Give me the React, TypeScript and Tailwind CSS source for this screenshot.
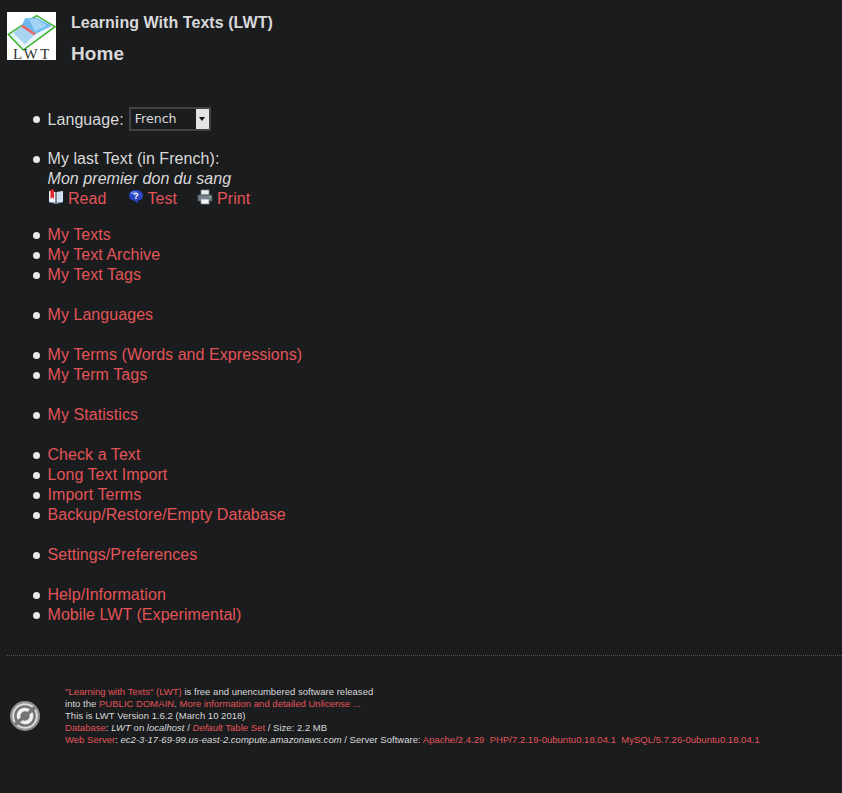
import React from 'react';

const link = 'text-[#e25458]';
const bullet = "relative list-none before:content-[''] before:absolute before:left-[-14.5px] before:top-[7px] before:w-[7px] before:h-[7px] before:rounded-full before:bg-[#e8e8e8]";
const firstBullet = "relative list-none h-[25px] before:content-[''] before:absolute before:left-[-14.5px] before:top-[8.5px] before:w-[7px] before:h-[7px] before:rounded-full before:bg-[#e8e8e8]";

function Logo() {
  return (
    <svg width="49" height="48" viewBox="0 0 49 48" className="block shrink-0 bg-white overflow-visible">
      <path d="M1.3 22.3 L29.7 3.7 L48 14.7 L16.3 38 Z" fill="#e8f5fb" stroke="#3bb32f" strokeWidth="1.5" />
      <path d="M6.3 21.3 L14.7 13.7 L28 22.3 L18 32.3 Z" fill="#a8d4f0" />
      <path d="M18 6.3 L29.7 5.7 L44.7 13.7 L28 22.3 L14.7 13.7 Z" fill="#6fb9f0" />
      <path d="M22 7 L30 7 L40 13.5 L28 19.5 Z" fill="#a2d3f6" />
      <path d="M14.7 13.7 L28 22.3" stroke="#e86a6a" strokeWidth="2.6" />
      <text x="25.5" y="47" textAnchor="middle" fontFamily="Liberation Serif, serif" fontSize="15" letterSpacing="2.6" fill="#333">LWT</text>
    </svg>
  );
}

function BookIcon() {
  return (
    <svg width="16" height="16" viewBox="0 0 16 16" className="block">
      <path d="M1 2 L7.5 3 V14 L1 13 Z" fill="#f2f5f9" />
      <path d="M8.5 3 L15 2 V13 L8.5 14 Z" fill="#dbe8f6" />
      <path d="M9.5 4.5 L14 3.8 M9.5 7 L14 6.3 M9.5 9.5 L14 8.8" stroke="#a9c6e6" strokeWidth="0.8" />
      <path d="M2.5 0.5 H6 V10 L4.2 8.2 L2.5 10 Z" fill="#e0262c" />
      <path d="M1 13 L8 14.5 L15 13" stroke="#6f8fb8" strokeWidth="1" fill="none" />
    </svg>
  );
}

function HelpIcon() {
  return (
    <svg width="16" height="16" viewBox="0 0 16 16" className="block">
      <path d="M8 1 C12 1 15 3.4 15 6.6 C15 9.6 12.4 11.6 9.6 11.8 L9.4 14.6 L7 11.9 C3.6 11.6 1 9.6 1 6.6 C1 3.4 4 1 8 1 Z" fill="#2b47c4" />
      <ellipse cx="6" cy="3.8" rx="3.4" ry="1.6" fill="#6f86e8" />
      <text x="8" y="10" textAnchor="middle" fontFamily="Liberation Sans, sans-serif" fontWeight="700" fontSize="9" fill="#fff">?</text>
    </svg>
  );
}

function PrintIcon() {
  return (
    <svg width="16" height="16" viewBox="0 0 16 16" className="block">
      <path d="M4 1 H12 V6 H4 Z" fill="#e8ecef" stroke="#7d8a94" strokeWidth="0.8" />
      <path d="M1 6 H15 V12 H1 Z" fill="#77838c" stroke="#4b555c" strokeWidth="0.8" />
      <path d="M12.5 7.5 H14 V8.8 H12.5 Z" fill="#7fd47a" />
      <path d="M4 10 H12 V15 H4 Z" fill="#f4f6f7" stroke="#7d8a94" strokeWidth="0.8" />
    </svg>
  );
}

function PdIcon() {
  return (
    <svg width="32" height="32" viewBox="0 0 32 32" className="block shrink-0">
      <circle cx="16" cy="16" r="15" fill="#8f8f8f" />
      <circle cx="16" cy="16" r="12.8" fill="#dcdcdc" />
      <circle cx="16" cy="16" r="10.8" fill="#757575" />
      <path d="M11 20.2 A6.5 6.5 0 0 1 21 11.8 M21 11.8 A6.5 6.5 0 0 1 11 20.2" stroke="#f0f0f0" strokeWidth="3.6" fill="none" />
      <path d="M6 24.5 L26 7.5" stroke="#757575" strokeWidth="3.4" />
    </svg>
  );
}

function MenuGroup({ items }: { items: string[] }) {
  return (
    <ul className="pl-[40.5px] mb-[20px]">
      {items.map((item) => (
        <li key={item} className={bullet}>
          <a href="#" className={link}>{item}</a>
        </li>
      ))}
    </ul>
  );
}

export default function App() {
  return (
    <div className="min-h-[793px] bg-[#1a1c1e] text-[16px] leading-[20px] tracking-[0.06px] text-[#d9d9d9] font-['Liberation_Sans',Arial,sans-serif] overflow-hidden">
      <div className="flex pl-[7px] pt-[12px]">
        <Logo />
        <div className="pl-[15px]">
          <h3 className="font-bold text-[16px] leading-[20px] mt-[1px]">Learning With Texts (LWT)</h3>
          <h4 className="font-bold text-[19px] leading-[22px] mt-[10px]">Home</h4>
        </div>
      </div>

      <div className="pl-[7px] pt-[42px]">
        <ul className="pl-[40.5px] mb-[17px]">
          <li className={firstBullet}>
            <div className="flex items-center h-[25px]">
              Language:
              <div className="relative ml-[5px] -mt-[2px] w-[82px] h-[24px]">
                <select className="appearance-none block w-full h-full border-2 border-[#3f4143] bg-[#1a1c1e] pl-[4px] text-[12.6px] tracking-normal text-[#dddddd] font-['DejaVu_Sans',sans-serif]">
                  <option>French</option>
                </select>
                <div className="absolute right-[2px] top-[2px] bottom-[2px] w-[13px] bg-[#e4e4e4] flex items-center justify-center">
                  <div className="w-0 h-0 border-x-[3px] border-x-transparent border-t-[4px] border-t-[#111111]" />
                </div>
              </div>
            </div>
          </li>
        </ul>

        <ul className="pl-[40.5px] mb-[16px]">
          <li className={bullet}>
            My last Text (in French):
            <br />
            <i>Mon premier don du sang</i>
            <div className="flex h-[20px]">
              <span><BookIcon /></span>
              <a href="#" className={`${link} ml-[4.5px]`}>Read</a>
              <span className="ml-[21px]"><HelpIcon /></span>
              <a href="#" className={`${link} ml-[4px]`}>Test</a>
              <span className="ml-[20px]"><PrintIcon /></span>
              <a href="#" className={`${link} ml-[4px]`}>Print</a>
            </div>
          </li>
        </ul>

        <MenuGroup items={['My Texts', 'My Text Archive', 'My Text Tags']} />
        <MenuGroup items={['My Languages']} />
        <MenuGroup items={['My Terms (Words and Expressions)', 'My Term Tags']} />
        <MenuGroup items={['My Statistics']} />
        <MenuGroup items={['Check a Text', 'Long Text Import', 'Import Terms', 'Backup/Restore/Empty Database']} />
        <MenuGroup items={['Settings/Preferences']} />
        <MenuGroup items={['Help/Information', 'Mobile LWT (Experimental)']} />
      </div>

      <hr className="ml-[7px] mt-[30px] border-0 border-t border-dotted border-[#555555]" />

      <div className="flex items-center pl-[9px] pt-[30px]">
        <PdIcon />
        <div className="pl-[24px] text-[9.5px] leading-[12px] tracking-[0.02px]">
          <div><a href="#" className={link}>"Learning with Texts" (LWT)</a> is free and unencumbered software released</div>
          <div>into the <a href="#" className={link}>PUBLIC DOMAIN</a>. <a href="#" className={link}>More information and detailed Unlicense ...</a></div>
          <div>This is LWT Version 1.6.2 (March 10 2018)</div>
          <div><a href="#" className={link}>Database</a>: <i>LWT</i> on <i>localhost</i> / <a href="#" className={link}><i>Default</i> Table Set</a> / Size: 2.2 MB</div>
          <div className="whitespace-nowrap"><a href="#" className={link}>Web Server</a>: <i>ec2-3-17-69-99.us-east-2.compute.amazonaws.com</i> / Server Software: <a href="#" className={link}>Apache/2.4.29</a>&nbsp; <a href="#" className={link}>PHP/7.2.19-0ubuntu0.18.04.1</a>&nbsp; <a href="#" className={link}>MySQL/5.7.26-0ubuntu0.18.04.1</a></div>
        </div>
      </div>
    </div>
  );
}
